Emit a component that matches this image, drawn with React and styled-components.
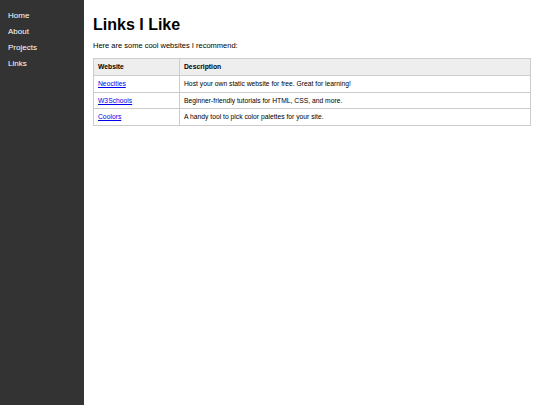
import React from "react";
import styled, { createGlobalStyle } from "styled-components";

const GlobalStyle = createGlobalStyle`
  html, body {
    margin: 0;
    padding: 0;
    height: 100%;
    background: #ffffff;
    font-family: "Liberation Sans", Arial, sans-serif;
  }
  #root {
    height: 100%;
  }
`;

const links = [
  { name: "Neocities", desc: "Host your own static website for free. Great for learning!" },
  { name: "W3Schools", desc: "Beginner-friendly tutorials for HTML, CSS, and more." },
  { name: "Coolors", desc: "A handy tool to pick color palettes for your site." },
];

export default function App() {
  return (
    <>
      <GlobalStyle />
      <Page>
        <Sidebar>
          <NavLink href="#">Home</NavLink>
          <NavLink href="#">About</NavLink>
          <NavLink href="#">Projects</NavLink>
          <NavLink href="#">Links</NavLink>
        </Sidebar>
        <Main>
          <Title>Links I Like</Title>
          <Intro>Here are some cool websites I recommend:</Intro>
          <Table>
            <thead>
              <tr>
                <Th $w="86px">Website</Th>
                <Th>Description</Th>
              </tr>
            </thead>
            <tbody>
              {links.map((l) => (
                <tr key={l.name}>
                  <Td>
                    <SiteLink href="#">{l.name}</SiteLink>
                  </Td>
                  <Td>{l.desc}</Td>
                </tr>
              ))}
            </tbody>
          </Table>
        </Main>
      </Page>
    </>
  );
}

const Page = styled.div`
  display: flex;
  min-height: 405px;
`;

const Sidebar = styled.nav`
  width: 84px;
  flex-shrink: 0;
  background: #333333;
  padding: 8px 8px;
  box-sizing: border-box;
  display: flex;
  flex-direction: column;
`;

const NavLink = styled.a`
  color: #ffffff;
  text-decoration: none;
  font-size: 8px;
  line-height: 16px;
`;

const Main = styled.main`
  flex: 1;
  padding: 9px 9px 9px 9px;
  box-sizing: border-box;
`;

const Title = styled.h1`
  font-size: 16px;
  font-weight: bold;
  margin: 7px 0 7px;
  color: #000;
`;

const Intro = styled.p`
  font-size: 7.5px;
  margin: 0 0 8px;
  color: #000;
`;

const Table = styled.table`
  width: 100%;
  border-collapse: collapse;
  font-size: 6.75px;
  line-height: 7.75px;
`;

const Th = styled.th`
  background: #eeeeee;
  border: 1px solid #cccccc;
  text-align: left;
  font-weight: bold;
  padding: 4px 4px;
  box-sizing: border-box;
  width: ${(p) => p.$w || "auto"};
`;

const Td = styled.td`
  border: 1px solid #cccccc;
  padding: 4px 4px;
`;

const SiteLink = styled.a`
  color: #0000ee;
  text-decoration: underline;
`;
